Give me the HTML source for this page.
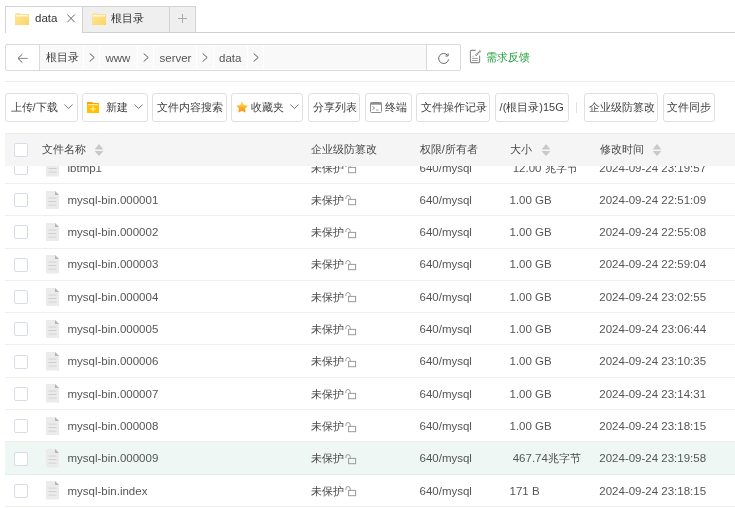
<!DOCTYPE html>
<html><head><meta charset="utf-8">
<style>
*{box-sizing:border-box;margin:0;padding:0}
html,body{width:735px;height:508px;overflow:hidden;background:#fff}
body{position:relative;will-change:transform;font-family:"Liberation Sans",sans-serif;font-size:11.5px;color:#555}
.abs{position:absolute}
.tab{position:absolute;top:6px;height:27px;border:1px solid #d3d3d3;border-bottom:none;background:#efefef}
.tabline{position:absolute;left:82px;right:0;top:32px;height:1px;background:#d0d0d0}
.ttxt{position:absolute;top:9.5px;font-size:11.5px;line-height:16px;color:#333;white-space:nowrap}
.addr{position:absolute;left:5px;top:44px;width:456px;height:27px;border:1px solid #dadada;border-radius:2px;background:#fff}
.seg{position:absolute;top:45px;height:25px;background:#fafafa}
.bct{position:absolute;top:49.8px;line-height:16px;font-size:11.5px;color:#555;white-space:nowrap}
.hline{position:absolute;left:5px;right:0;top:81px;height:1px;background:#ececec}
.btn{position:absolute;top:93px;height:29px;border:1px solid #dde0e6;border-radius:3px;background:#fff}
.bt{position:absolute;top:98.5px;font-size:11px;line-height:16px;color:#404040;white-space:nowrap}
.thead{position:absolute;left:5px;right:0;top:132.5px;height:33.5px;background:#f5f5f5;border-top:1px solid #ececec;z-index:2}
.row{position:absolute;left:5px;right:0;height:32.3px;border-bottom:1px solid #eeeeee;background:#fff}
.row.hov{background:#eff7f5;border-bottom-color:#e2eeea}
.cb{position:absolute;left:9px;width:14px;height:14px;border:1px solid #d8dce6;border-radius:2px;background:#fff}
.c{position:absolute;white-space:nowrap;top:7.9px;line-height:16px}
.cjk{font-size:11px;color:#484848}
.th{position:absolute;top:7.9px;font-size:11px;line-height:16px;color:#484848;white-space:nowrap}
</style></head><body>
<div class="tab" style="left:5px;width:78px;height:27px;background:#fff;z-index:1"></div>
<div class="tab" style="left:82px;width:88px"></div>
<div class="tab" style="left:169px;width:27px"></div>
<div class="tabline"></div>
<div class="abs" style="left:5px;top:6px;width:78px;height:27px;z-index:3;pointer-events:none"></div>
<svg class="abs"  style="z-index:4;left:15px;top:13px" width="14" height="12" viewBox="0 0 14 12">
<defs><linearGradient id="fg1" x1="0" x2="1" y1="0" y2="1"><stop offset="0" stop-color="#fde7a0"/><stop offset="1" stop-color="#fcd462"/></linearGradient></defs>
<path d="M0 0.6Q0 0 0.6 0H4.6L5.6 1H13.4Q14 1 14 1.6V11.4Q14 12 13.4 12H0.6Q0 12 0 11.4Z" fill="url(#fg1)"/>
<rect x="1" y="2.2" width="12" height="1.2" fill="#fff" opacity="0.9"/>
</svg>
<div class="ttxt" style="left:35px;z-index:4">data</div>
<svg class="abs" style="left:67px;top:14px;z-index:4" width="9" height="9" viewBox="0 0 9 9"><path d="M0.3 0.5L7.8 8.3M7.8 0.5L0.3 8.3" stroke="#5a5a5a" stroke-width="0.9"/></svg>
<svg class="abs" style="left:92px;top:13px" width="14" height="12" viewBox="0 0 14 12">
<defs><linearGradient id="fg2" x1="0" x2="1" y1="0" y2="1"><stop offset="0" stop-color="#fde7a0"/><stop offset="1" stop-color="#fcd462"/></linearGradient></defs>
<path d="M0 0.6Q0 0 0.6 0H4.6L5.6 1H13.4Q14 1 14 1.6V11.4Q14 12 13.4 12H0.6Q0 12 0 11.4Z" fill="url(#fg2)"/>
<rect x="1" y="2.2" width="12" height="1.2" fill="#fff" opacity="0.9"/>
</svg>
<div class="ttxt" style="left:111px;top:10px;font-size:11px">根目录</div>
<svg class="abs" style="left:178px;top:14px" width="10" height="10" viewBox="0 0 10 10"><path d="M4.5 0V9M0 4.5H9" stroke="#aaaaaa" stroke-width="1"/></svg>
<div class="addr"></div>
<div class="abs" style="left:40px;top:46px;width:386px;height:23px;background:#f9f9f9"></div>
<div class="abs" style="left:83px;top:46px;width:1px;height:23px;background:#fff"></div>
<div class="abs" style="left:99px;top:46px;width:1px;height:23px;background:#fff"></div>
<div class="abs" style="left:137px;top:46px;width:1px;height:23px;background:#fff"></div>
<div class="abs" style="left:153px;top:46px;width:1px;height:23px;background:#fff"></div>
<div class="abs" style="left:196px;top:46px;width:1px;height:23px;background:#fff"></div>
<div class="abs" style="left:213px;top:46px;width:1px;height:23px;background:#fff"></div>
<div class="abs" style="left:247px;top:46px;width:1px;height:23px;background:#fff"></div>
<div class="abs" style="left:263px;top:46px;width:1px;height:23px;background:#fff"></div>
<div class="abs" style="left:39px;top:44px;width:1px;height:27px;background:#dadada"></div>
<div class="abs" style="left:426px;top:44px;width:1px;height:27px;background:#dadada"></div>
<svg class="abs" style="left:17px;top:53px" width="12" height="11" viewBox="0 0 12 11"><path d="M5.4 1.1L1 5.4L5.4 9.7" fill="none" stroke="#666" stroke-width="1"/><path d="M1.2 5.4H10.7" fill="none" stroke="#888" stroke-width="1"/></svg>
<div class="bct" style="left:45.5px;font-size:11px;top:49px;color:#404040">根目录</div>
<div class="bct" style="left:105.5px">www</div>
<div class="bct" style="left:159.5px">server</div>
<div class="bct" style="left:219px">data</div>
<svg class="abs" style="left:89px;top:53px" width="6" height="9" viewBox="0 0 6 9"><path d="M0.7 0.5L5.2 4.5L0.7 8.5" fill="none" stroke="#5a5a5a" stroke-width="1"/></svg>
<svg class="abs" style="left:143px;top:53px" width="6" height="9" viewBox="0 0 6 9"><path d="M0.7 0.5L5.2 4.5L0.7 8.5" fill="none" stroke="#5a5a5a" stroke-width="1"/></svg>
<svg class="abs" style="left:202px;top:53px" width="6" height="9" viewBox="0 0 6 9"><path d="M0.7 0.5L5.2 4.5L0.7 8.5" fill="none" stroke="#5a5a5a" stroke-width="1"/></svg>
<svg class="abs" style="left:253px;top:53px" width="6" height="9" viewBox="0 0 6 9"><path d="M0.7 0.5L5.2 4.5L0.7 8.5" fill="none" stroke="#5a5a5a" stroke-width="1"/></svg>
<svg class="abs" style="left:437px;top:52px" width="13" height="13" viewBox="0 0 13 13"><path d="M10.6 3.4A5 5 0 1 0 11.6 7.4" fill="none" stroke="#6a6a6a" stroke-width="1"/><path d="M11.1 1.4V4.0H8.5" fill="none" stroke="#6a6a6a" stroke-width="1"/></svg>
<svg class="abs" style="left:469px;top:49px" width="13" height="15" viewBox="0 0 13 15"><path d="M6.6 1.4H2.4Q1.4 1.4 1.4 2.4V12.6Q1.4 13.6 2.4 13.6H9.6Q10.6 13.6 10.6 12.6V6.4" fill="none" stroke="#8a8a8a" stroke-width="1.1"/><path d="M6.6 6.6L11.8 1.4" stroke="#8a8a8a" stroke-width="2" stroke-dasharray="1.3 0.5"/><path d="M3.2 9.4H8.8M3.2 11.5H8.8" stroke="#9a9a9a" stroke-width="1"/><path d="M3.2 7.3H5" stroke="#cfcfcf" stroke-width="1.2"/></svg>
<div class="abs" style="left:485.5px;top:49px;font-size:11px;line-height:16px;color:#1c9d36;white-space:nowrap">需求反馈</div>
<div class="hline"></div>
<div class="btn" style="left:5px;width:73px"></div>
<div class="btn" style="left:82px;width:66px"></div>
<div class="btn" style="left:152px;width:75px"></div>
<div class="btn" style="left:231px;width:72px"></div>
<div class="btn" style="left:308px;width:52px"></div>
<div class="btn" style="left:365px;width:47px"></div>
<div class="btn" style="left:416px;width:74px"></div>
<div class="btn" style="left:495px;width:74px"></div>
<div class="btn" style="left:584px;width:74px"></div>
<div class="btn" style="left:663px;width:52px"></div>
<div class="bt" style="left:10.6px">上传/下载</div>
<div class="bt" style="left:105.7px">新建</div>
<div class="bt" style="left:157px">文件内容搜索</div>
<div class="bt" style="left:251px">收藏夹</div>
<div class="bt" style="left:312.7px">分享列表</div>
<div class="bt" style="left:385px">终端</div>
<div class="bt" style="left:420.9px">文件操作记录</div>
<div class="bt" style="left:499.6px">/(根目录)15G</div>
<div class="bt" style="left:588.6px">企业级防篡改</div>
<div class="bt" style="left:667px">文件同步</div>
<svg class="abs" style="left:63.5px;top:104px" width="9" height="6" viewBox="0 0 9 6"><path d="M0.4 0.6L4.5 4.4L8.6 0.6" fill="none" stroke="#6a6a6a" stroke-width="0.9"/></svg>
<svg class="abs" style="left:133.5px;top:104px" width="9" height="6" viewBox="0 0 9 6"><path d="M0.4 0.6L4.5 4.4L8.6 0.6" fill="none" stroke="#6a6a6a" stroke-width="0.9"/></svg>
<svg class="abs" style="left:290px;top:104px" width="9" height="6" viewBox="0 0 9 6"><path d="M0.4 0.6L4.5 4.4L8.6 0.6" fill="none" stroke="#6a6a6a" stroke-width="0.9"/></svg>
<svg class="abs" style="left:87px;top:102px" width="12" height="11" viewBox="0 0 12 11"><path d="M0 0H5L6 1H12V11H0Z" fill="#ffc000"/><path d="M0 0H5L6 1H12V2.2H0Z" fill="#ffa200"/><rect x="1" y="2.2" width="10" height="1" fill="#fff6d8"/><path d="M6 4.2V9.4M3.4 6.8H8.6" stroke="#ffe9a0" stroke-width="1.3"/></svg>
<svg class="abs" style="left:235.7px;top:100.6px" width="12" height="12" viewBox="0 0 12 12"><defs><linearGradient id="st" x1="0" x2="0" y1="0" y2="1"><stop offset="0" stop-color="#f7e08a"/><stop offset="0.4" stop-color="#fcc645"/><stop offset="0.55" stop-color="#ffaa22"/><stop offset="1" stop-color="#ff9412"/></linearGradient></defs><path d="M6.00 0.40Q6.3 0.4 7.88 4.01L11.50 4.60Q12 4.9 9.04 7.59L9.64 11.40Q9.5 11.9 6.00 9.80L2.36 11.40Q2.2 11.9 2.96 7.59L0.40 4.90Q0.1 4.6 4.12 4.01Q5.7 0.4 6.00 0.40Z" fill="url(#st)"/></svg>
<svg class="abs" style="left:370px;top:102px" width="12" height="11" viewBox="0 0 12 11"><rect x="0.5" y="0.5" width="11" height="10" rx="1" fill="none" stroke="#8c8c8c" stroke-width="1"/><rect x="0.5" y="0.5" width="11" height="2.2" fill="#8c8c8c"/><path d="M2.4 4.3L4.6 6L2.4 7.9" fill="none" stroke="#808080" stroke-width="0.9"/><path d="M5.8 8.1H8.5" stroke="#9a9a9a" stroke-width="0.9"/></svg>
<div class="abs" style="left:576px;top:102px;width:1px;height:11px;background:#e0e0e0"></div>
<div class="row" style="top:151.70px"><div class="cb" style="top:9.15px"></div><svg class="abs" style="left:41px;top:6.65px" width="13" height="18.5" viewBox="0 0 13 18.5">
<path d="M0 0H9L13 4V18.5H0Z" fill="#ebebeb"/>
<path d="M9 0L13 4H9Z" fill="#b4b4b4"/>
<rect x="2.5" y="6.6" width="8" height="0.9" fill="#d2d2d2"/>
<rect x="2.5" y="10.1" width="8" height="0.9" fill="#cbcbcb"/>
<rect x="2.5" y="13.7" width="8" height="0.9" fill="#d2d2d2"/>
</svg><div class="c txt" style="left:62.5px">ibtmp1</div><div class="c cjk" style="left:306.4px">未保护</div><svg class="abs" style="left:339.5px;top:10.45px" width="12" height="12" viewBox="0 0 12 12">
<path d="M0.9 5.0V3.7A2.15 2.15 0 0 1 5.2 3.7V5.3" fill="none" stroke="#9a9a9a" stroke-width="1"/>
<rect x="3.6" y="5.4" width="7" height="5.3" fill="none" stroke="#9a9a9a" stroke-width="1"/>
</svg><div class="c txt" style="left:414.5px">640/mysql</div><div class="c txt" style="left:504.5px">&nbsp;12.00 <span class=cjk>兆字节</span></div><div class="c txt" style="left:594.3px">2024-09-24 23:19:57</div></div>
<div class="row" style="top:184.00px"><div class="cb" style="top:9.15px"></div><svg class="abs" style="left:41px;top:6.65px" width="13" height="18.5" viewBox="0 0 13 18.5">
<path d="M0 0H9L13 4V18.5H0Z" fill="#ebebeb"/>
<path d="M9 0L13 4H9Z" fill="#b4b4b4"/>
<rect x="2.5" y="6.6" width="8" height="0.9" fill="#d2d2d2"/>
<rect x="2.5" y="10.1" width="8" height="0.9" fill="#cbcbcb"/>
<rect x="2.5" y="13.7" width="8" height="0.9" fill="#d2d2d2"/>
</svg><div class="c txt" style="left:62.5px">mysql-bin.000001</div><div class="c cjk" style="left:306.4px">未保护</div><svg class="abs" style="left:339.5px;top:10.45px" width="12" height="12" viewBox="0 0 12 12">
<path d="M0.9 5.0V3.7A2.15 2.15 0 0 1 5.2 3.7V5.3" fill="none" stroke="#9a9a9a" stroke-width="1"/>
<rect x="3.6" y="5.4" width="7" height="5.3" fill="none" stroke="#9a9a9a" stroke-width="1"/>
</svg><div class="c txt" style="left:414.5px">640/mysql</div><div class="c txt" style="left:504.5px">1.00 GB</div><div class="c txt" style="left:594.3px">2024-09-24 22:51:09</div></div>
<div class="row" style="top:216.30px"><div class="cb" style="top:9.15px"></div><svg class="abs" style="left:41px;top:6.65px" width="13" height="18.5" viewBox="0 0 13 18.5">
<path d="M0 0H9L13 4V18.5H0Z" fill="#ebebeb"/>
<path d="M9 0L13 4H9Z" fill="#b4b4b4"/>
<rect x="2.5" y="6.6" width="8" height="0.9" fill="#d2d2d2"/>
<rect x="2.5" y="10.1" width="8" height="0.9" fill="#cbcbcb"/>
<rect x="2.5" y="13.7" width="8" height="0.9" fill="#d2d2d2"/>
</svg><div class="c txt" style="left:62.5px">mysql-bin.000002</div><div class="c cjk" style="left:306.4px">未保护</div><svg class="abs" style="left:339.5px;top:10.45px" width="12" height="12" viewBox="0 0 12 12">
<path d="M0.9 5.0V3.7A2.15 2.15 0 0 1 5.2 3.7V5.3" fill="none" stroke="#9a9a9a" stroke-width="1"/>
<rect x="3.6" y="5.4" width="7" height="5.3" fill="none" stroke="#9a9a9a" stroke-width="1"/>
</svg><div class="c txt" style="left:414.5px">640/mysql</div><div class="c txt" style="left:504.5px">1.00 GB</div><div class="c txt" style="left:594.3px">2024-09-24 22:55:08</div></div>
<div class="row" style="top:248.60px"><div class="cb" style="top:9.15px"></div><svg class="abs" style="left:41px;top:6.65px" width="13" height="18.5" viewBox="0 0 13 18.5">
<path d="M0 0H9L13 4V18.5H0Z" fill="#ebebeb"/>
<path d="M9 0L13 4H9Z" fill="#b4b4b4"/>
<rect x="2.5" y="6.6" width="8" height="0.9" fill="#d2d2d2"/>
<rect x="2.5" y="10.1" width="8" height="0.9" fill="#cbcbcb"/>
<rect x="2.5" y="13.7" width="8" height="0.9" fill="#d2d2d2"/>
</svg><div class="c txt" style="left:62.5px">mysql-bin.000003</div><div class="c cjk" style="left:306.4px">未保护</div><svg class="abs" style="left:339.5px;top:10.45px" width="12" height="12" viewBox="0 0 12 12">
<path d="M0.9 5.0V3.7A2.15 2.15 0 0 1 5.2 3.7V5.3" fill="none" stroke="#9a9a9a" stroke-width="1"/>
<rect x="3.6" y="5.4" width="7" height="5.3" fill="none" stroke="#9a9a9a" stroke-width="1"/>
</svg><div class="c txt" style="left:414.5px">640/mysql</div><div class="c txt" style="left:504.5px">1.00 GB</div><div class="c txt" style="left:594.3px">2024-09-24 22:59:04</div></div>
<div class="row" style="top:280.90px"><div class="cb" style="top:9.15px"></div><svg class="abs" style="left:41px;top:6.65px" width="13" height="18.5" viewBox="0 0 13 18.5">
<path d="M0 0H9L13 4V18.5H0Z" fill="#ebebeb"/>
<path d="M9 0L13 4H9Z" fill="#b4b4b4"/>
<rect x="2.5" y="6.6" width="8" height="0.9" fill="#d2d2d2"/>
<rect x="2.5" y="10.1" width="8" height="0.9" fill="#cbcbcb"/>
<rect x="2.5" y="13.7" width="8" height="0.9" fill="#d2d2d2"/>
</svg><div class="c txt" style="left:62.5px">mysql-bin.000004</div><div class="c cjk" style="left:306.4px">未保护</div><svg class="abs" style="left:339.5px;top:10.45px" width="12" height="12" viewBox="0 0 12 12">
<path d="M0.9 5.0V3.7A2.15 2.15 0 0 1 5.2 3.7V5.3" fill="none" stroke="#9a9a9a" stroke-width="1"/>
<rect x="3.6" y="5.4" width="7" height="5.3" fill="none" stroke="#9a9a9a" stroke-width="1"/>
</svg><div class="c txt" style="left:414.5px">640/mysql</div><div class="c txt" style="left:504.5px">1.00 GB</div><div class="c txt" style="left:594.3px">2024-09-24 23:02:55</div></div>
<div class="row" style="top:313.20px"><div class="cb" style="top:9.15px"></div><svg class="abs" style="left:41px;top:6.65px" width="13" height="18.5" viewBox="0 0 13 18.5">
<path d="M0 0H9L13 4V18.5H0Z" fill="#ebebeb"/>
<path d="M9 0L13 4H9Z" fill="#b4b4b4"/>
<rect x="2.5" y="6.6" width="8" height="0.9" fill="#d2d2d2"/>
<rect x="2.5" y="10.1" width="8" height="0.9" fill="#cbcbcb"/>
<rect x="2.5" y="13.7" width="8" height="0.9" fill="#d2d2d2"/>
</svg><div class="c txt" style="left:62.5px">mysql-bin.000005</div><div class="c cjk" style="left:306.4px">未保护</div><svg class="abs" style="left:339.5px;top:10.45px" width="12" height="12" viewBox="0 0 12 12">
<path d="M0.9 5.0V3.7A2.15 2.15 0 0 1 5.2 3.7V5.3" fill="none" stroke="#9a9a9a" stroke-width="1"/>
<rect x="3.6" y="5.4" width="7" height="5.3" fill="none" stroke="#9a9a9a" stroke-width="1"/>
</svg><div class="c txt" style="left:414.5px">640/mysql</div><div class="c txt" style="left:504.5px">1.00 GB</div><div class="c txt" style="left:594.3px">2024-09-24 23:06:44</div></div>
<div class="row" style="top:345.50px"><div class="cb" style="top:9.15px"></div><svg class="abs" style="left:41px;top:6.65px" width="13" height="18.5" viewBox="0 0 13 18.5">
<path d="M0 0H9L13 4V18.5H0Z" fill="#ebebeb"/>
<path d="M9 0L13 4H9Z" fill="#b4b4b4"/>
<rect x="2.5" y="6.6" width="8" height="0.9" fill="#d2d2d2"/>
<rect x="2.5" y="10.1" width="8" height="0.9" fill="#cbcbcb"/>
<rect x="2.5" y="13.7" width="8" height="0.9" fill="#d2d2d2"/>
</svg><div class="c txt" style="left:62.5px">mysql-bin.000006</div><div class="c cjk" style="left:306.4px">未保护</div><svg class="abs" style="left:339.5px;top:10.45px" width="12" height="12" viewBox="0 0 12 12">
<path d="M0.9 5.0V3.7A2.15 2.15 0 0 1 5.2 3.7V5.3" fill="none" stroke="#9a9a9a" stroke-width="1"/>
<rect x="3.6" y="5.4" width="7" height="5.3" fill="none" stroke="#9a9a9a" stroke-width="1"/>
</svg><div class="c txt" style="left:414.5px">640/mysql</div><div class="c txt" style="left:504.5px">1.00 GB</div><div class="c txt" style="left:594.3px">2024-09-24 23:10:35</div></div>
<div class="row" style="top:377.80px"><div class="cb" style="top:9.15px"></div><svg class="abs" style="left:41px;top:6.65px" width="13" height="18.5" viewBox="0 0 13 18.5">
<path d="M0 0H9L13 4V18.5H0Z" fill="#ebebeb"/>
<path d="M9 0L13 4H9Z" fill="#b4b4b4"/>
<rect x="2.5" y="6.6" width="8" height="0.9" fill="#d2d2d2"/>
<rect x="2.5" y="10.1" width="8" height="0.9" fill="#cbcbcb"/>
<rect x="2.5" y="13.7" width="8" height="0.9" fill="#d2d2d2"/>
</svg><div class="c txt" style="left:62.5px">mysql-bin.000007</div><div class="c cjk" style="left:306.4px">未保护</div><svg class="abs" style="left:339.5px;top:10.45px" width="12" height="12" viewBox="0 0 12 12">
<path d="M0.9 5.0V3.7A2.15 2.15 0 0 1 5.2 3.7V5.3" fill="none" stroke="#9a9a9a" stroke-width="1"/>
<rect x="3.6" y="5.4" width="7" height="5.3" fill="none" stroke="#9a9a9a" stroke-width="1"/>
</svg><div class="c txt" style="left:414.5px">640/mysql</div><div class="c txt" style="left:504.5px">1.00 GB</div><div class="c txt" style="left:594.3px">2024-09-24 23:14:31</div></div>
<div class="row" style="top:410.10px"><div class="cb" style="top:9.15px"></div><svg class="abs" style="left:41px;top:6.65px" width="13" height="18.5" viewBox="0 0 13 18.5">
<path d="M0 0H9L13 4V18.5H0Z" fill="#ebebeb"/>
<path d="M9 0L13 4H9Z" fill="#b4b4b4"/>
<rect x="2.5" y="6.6" width="8" height="0.9" fill="#d2d2d2"/>
<rect x="2.5" y="10.1" width="8" height="0.9" fill="#cbcbcb"/>
<rect x="2.5" y="13.7" width="8" height="0.9" fill="#d2d2d2"/>
</svg><div class="c txt" style="left:62.5px">mysql-bin.000008</div><div class="c cjk" style="left:306.4px">未保护</div><svg class="abs" style="left:339.5px;top:10.45px" width="12" height="12" viewBox="0 0 12 12">
<path d="M0.9 5.0V3.7A2.15 2.15 0 0 1 5.2 3.7V5.3" fill="none" stroke="#9a9a9a" stroke-width="1"/>
<rect x="3.6" y="5.4" width="7" height="5.3" fill="none" stroke="#9a9a9a" stroke-width="1"/>
</svg><div class="c txt" style="left:414.5px">640/mysql</div><div class="c txt" style="left:504.5px">1.00 GB</div><div class="c txt" style="left:594.3px">2024-09-24 23:18:15</div></div>
<div class="row hov" style="top:442.40px"><div class="cb" style="top:9.15px"></div><svg class="abs" style="left:41px;top:6.65px" width="13" height="18.5" viewBox="0 0 13 18.5">
<path d="M0 0H9L13 4V18.5H0Z" fill="#ebebeb"/>
<path d="M9 0L13 4H9Z" fill="#b4b4b4"/>
<rect x="2.5" y="6.6" width="8" height="0.9" fill="#d2d2d2"/>
<rect x="2.5" y="10.1" width="8" height="0.9" fill="#cbcbcb"/>
<rect x="2.5" y="13.7" width="8" height="0.9" fill="#d2d2d2"/>
</svg><div class="c txt" style="left:62.5px">mysql-bin.000009</div><div class="c cjk" style="left:306.4px">未保护</div><svg class="abs" style="left:339.5px;top:10.45px" width="12" height="12" viewBox="0 0 12 12">
<path d="M0.9 5.0V3.7A2.15 2.15 0 0 1 5.2 3.7V5.3" fill="none" stroke="#9a9a9a" stroke-width="1"/>
<rect x="3.6" y="5.4" width="7" height="5.3" fill="none" stroke="#9a9a9a" stroke-width="1"/>
</svg><div class="c txt" style="left:414.5px">640/mysql</div><div class="c txt" style="left:504.5px">&nbsp;467.74<span class=cjk>兆字节</span></div><div class="c txt" style="left:594.3px">2024-09-24 23:19:58</div></div>
<div class="row" style="top:474.70px"><div class="cb" style="top:9.15px"></div><svg class="abs" style="left:41px;top:6.65px" width="13" height="18.5" viewBox="0 0 13 18.5">
<path d="M0 0H9L13 4V18.5H0Z" fill="#ebebeb"/>
<path d="M9 0L13 4H9Z" fill="#b4b4b4"/>
<rect x="2.5" y="6.6" width="8" height="0.9" fill="#d2d2d2"/>
<rect x="2.5" y="10.1" width="8" height="0.9" fill="#cbcbcb"/>
<rect x="2.5" y="13.7" width="8" height="0.9" fill="#d2d2d2"/>
</svg><div class="c txt" style="left:62.5px">mysql-bin.index</div><div class="c cjk" style="left:306.4px">未保护</div><svg class="abs" style="left:339.5px;top:10.45px" width="12" height="12" viewBox="0 0 12 12">
<path d="M0.9 5.0V3.7A2.15 2.15 0 0 1 5.2 3.7V5.3" fill="none" stroke="#9a9a9a" stroke-width="1"/>
<rect x="3.6" y="5.4" width="7" height="5.3" fill="none" stroke="#9a9a9a" stroke-width="1"/>
</svg><div class="c txt" style="left:414.5px">640/mysql</div><div class="c txt" style="left:504.5px">171 B</div><div class="c txt" style="left:594.3px">2024-09-24 23:18:15</div></div>
<div class="thead">
<div class="cb" style="top:9.3px"></div>
<div class="th" style="left:36.6px">文件名称</div>
<div class="th" style="left:306.4px">企业级防篡改</div>
<div class="th" style="left:414.7px">权限/所有者</div>
<div class="th" style="left:504.7px">大小</div>
<div class="th" style="left:594.5px">修改时间</div>
</div>
<svg class="abs"  style="z-index:3;left:94px;top:144px" width="10" height="12" viewBox="0 0 10 12">
<path d="M5 0L9.5 5.6H0.5Z" fill="#c9c9c9"/><path d="M0.5 6.9H9.5L5 12Z" fill="#c9c9c9"/>
</svg>
<svg class="abs"  style="z-index:3;left:540.5px;top:144px" width="10" height="12" viewBox="0 0 10 12">
<path d="M5 0L9.5 5.6H0.5Z" fill="#c9c9c9"/><path d="M0.5 6.9H9.5L5 12Z" fill="#c9c9c9"/>
</svg>
<svg class="abs"  style="z-index:3;left:652.2px;top:144px" width="10" height="12" viewBox="0 0 10 12">
<path d="M5 0L9.5 5.6H0.5Z" fill="#c9c9c9"/><path d="M0.5 6.9H9.5L5 12Z" fill="#c9c9c9"/>
</svg>
</body></html>
